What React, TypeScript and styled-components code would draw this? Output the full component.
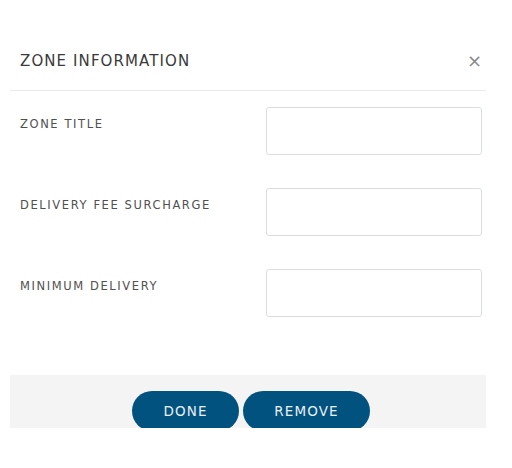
import styled, { createGlobalStyle } from 'styled-components';

const GlobalStyle = createGlobalStyle`
	body {
		margin: 0;
		background: #ffffff;
		font-family: 'DejaVu Sans', 'Liberation Sans', sans-serif;
	}
`;

const FIELDS = ['ZONE TITLE', 'DELIVERY FEE SURCHARGE', 'MINIMUM DELIVERY'];

const App = () => {
	return (
		<>
			<GlobalStyle />
			<Modal>
				<Header>
					<Title>ZONE INFORMATION</Title>
					<Close>×</Close>
				</Header>
				<Body>
					{FIELDS.map((label) => (
						<Row key={label}>
							<Label>{label}</Label>
							<Input type="text" />
						</Row>
					))}
				</Body>
				<Footer>
					<ActionButton>DONE</ActionButton>
					<ActionButton wide>REMOVE</ActionButton>
				</Footer>
			</Modal>
		</>
	);
};

const Modal = styled.div`
	width: 476px;
	margin: 32px 0 0 10px;
`;

const Header = styled.div`
	height: 58px;
	display: flex;
	align-items: center;
	justify-content: space-between;
	padding: 0 4px 0 10px;
	border-bottom: 1px solid #e6e9ee;
`;

const Title = styled.h2`
	margin: 0;
	font-size: 15px;
	font-weight: normal;
	letter-spacing: 1.1px;
	color: #3a3a3a;
`;

const Close = styled.span`
	font-size: 18px;
	color: #8a8a8a;
	line-height: 1;
`;

const Body = styled.div`
	display: flex;
	flex-direction: column;
	gap: 33px;
	padding: 16px 4px 58px 10px;
`;

const Row = styled.div`
	display: flex;
	justify-content: space-between;
	align-items: flex-start;
`;

const Label = styled.label`
	padding-top: 10px;
	font-size: 11.5px;
	color: #505050;
	letter-spacing: 1.6px;
`;

const Input = styled.input`
	box-sizing: border-box;
	width: 216px;
	height: 48px;
	border: 1px solid #d9dde4;
	border-radius: 3px;
	background: #ffffff;
	outline: none;
`;

const Footer = styled.div`
	height: 53px;
	box-sizing: border-box;
	padding: 16px 0 0 6px;
	background: #f4f4f4;
	overflow: hidden;
	display: flex;
	justify-content: center;
	gap: 4px;
`;

const ActionButton = styled.button<{ wide?: boolean }>`
	flex: none;
	width: ${(p) => (p.wide ? '127px' : '107px')};
	height: 40px;
	border: none;
	border-radius: 20px;
	background: #02527f;
	color: #e8f0f6;
	font-family: inherit;
	font-size: 13.5px;
	letter-spacing: 1.1px;
	cursor: pointer;
`;

export default App;
